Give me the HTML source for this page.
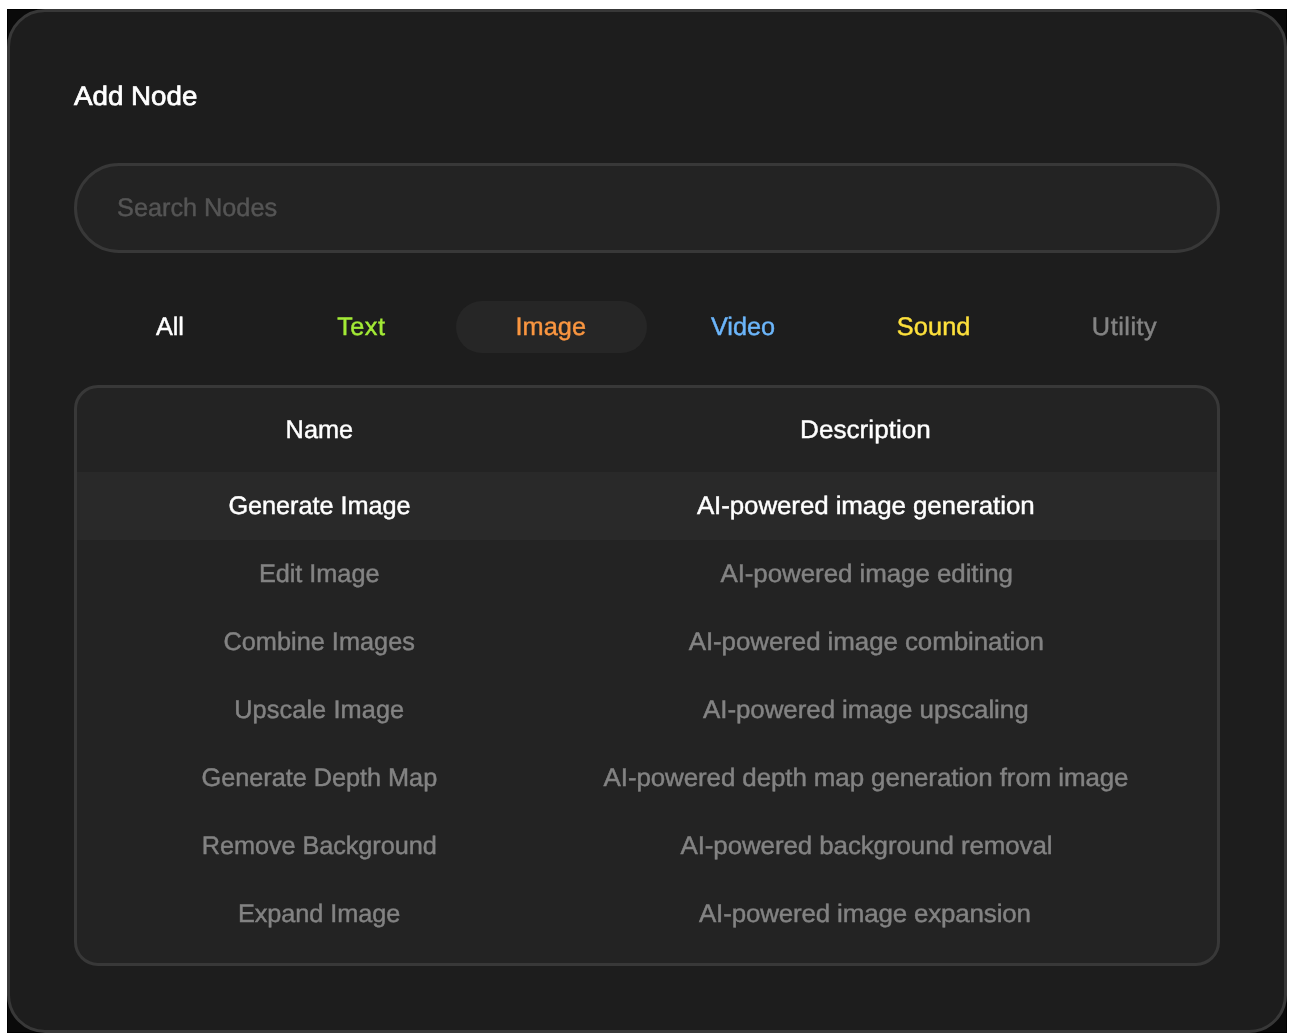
<!DOCTYPE html>
<html><head><meta charset="utf-8"><title>Add Node</title>
<style>
html,body{margin:0;padding:0;background:#fff;}
body{width:1295px;height:1036px;position:relative;overflow:hidden;font-family:"Liberation Sans",sans-serif;}
.back{position:absolute;left:7px;top:9px;width:1280px;height:1024px;background:#0a0a0a;box-shadow:inset 0 0 0 1px #000;}
.panel{position:absolute;left:7px;top:9px;width:1280px;height:1024px;box-sizing:border-box;border:3px solid #383838;border-radius:38px;background:#1d1d1d;}
.search{position:absolute;left:74px;top:163px;width:1146px;height:90px;box-sizing:border-box;border:3px solid #383838;border-radius:45px;background:#232323;}
.pill{position:absolute;left:456px;top:301px;width:191px;height:52px;border-radius:26px;background:#262626;}
.table{position:absolute;left:74px;top:385px;width:1146px;height:581px;box-sizing:border-box;border:3px solid #383838;border-radius:24px;background:#232323;overflow:hidden;}
.hl{position:absolute;left:77px;top:472px;width:1140px;height:68px;background:#292929;}
.txt{position:absolute;left:0;top:0;width:1295px;height:1036px;will-change:transform;}
.t{position:absolute;white-space:nowrap;text-rendering:geometricPrecision;font-size:25.3px;line-height:0;height:0;width:0;display:flex;justify-content:center;align-items:baseline;color:#fff;}
.t span{display:inline-block;line-height:0;-webkit-text-stroke:0.45px currentColor;}
.l{justify-content:flex-start;}
.g{color:#838383;}
</style></head><body>
<div class="back"></div>
<div class="panel"></div>
<div class="search"></div>
<div class="pill"></div>
<div class="table"></div>
<div class="hl"></div>
<div class="txt">

<div class="t l" style="left:74.28px;top:96.05px;letter-spacing:-0.006px;font-size:26.7px;"><span style="margin-right:0.006px;transform:scaleX(1.04);transform-origin:left center;-webkit-text-stroke-width:0.7px;">Add Node</span></div>
<div class="t l" style="left:117.10px;top:207.53px;letter-spacing:-0.027px;color:#555;"><span style="margin-right:0.027px;">Search Nodes</span></div>
<div class="t " style="left:169.97px;top:326.53px;letter-spacing:-0.045px;color:#fff;"><span style="margin-right:0.045px;">All</span></div>
<div class="t " style="left:361.08px;top:326.53px;letter-spacing:0.431px;color:#a3ea36;"><span style="margin-right:-0.431px;">Text</span></div>
<div class="t " style="left:550.69px;top:326.53px;letter-spacing:0.06px;color:#fa9640;"><span style="margin-right:-0.06px;">Image</span></div>
<div class="t " style="left:743.07px;top:326.53px;letter-spacing:-0.001px;color:#6cb6fb;"><span style="margin-right:0.001px;">Video</span></div>
<div class="t " style="left:933.63px;top:326.53px;letter-spacing:0.1px;color:#fde03c;"><span style="margin-right:-0.1px;">Sound</span></div>
<div class="t " style="left:1124.31px;top:326.53px;letter-spacing:0.505px;color:#838383;"><span style="margin-right:-0.505px;">Utility</span></div>
<div class="t " style="left:319.39px;top:429.53px;letter-spacing:0.048px;"><span style="margin-right:-0.048px;">Name</span></div>
<div class="t " style="left:865.29px;top:429.53px;letter-spacing:0.034px;"><span style="margin-right:-0.034px;transform:scaleX(1.03);transform-origin:center center;">Description</span></div>
<div class="t " style="left:319.49px;top:505.53px;letter-spacing:-0.046px;"><span style="margin-right:0.046px;">Generate Image</span></div>
<div class="t " style="left:865.95px;top:505.53px;letter-spacing:-0.09px;"><span style="margin-right:0.09px;transform:scaleX(1.025);transform-origin:center center;">AI-powered image generation</span></div>
<div class="t g" style="left:319.18px;top:573.53px;letter-spacing:-0.036px;"><span style="margin-right:0.036px;">Edit Image</span></div>
<div class="t g" style="left:866.25px;top:573.53px;letter-spacing:-0.064px;"><span style="margin-right:0.064px;transform:scaleX(1.025);transform-origin:center center;">AI-powered image editing</span></div>
<div class="t g" style="left:319.19px;top:641.53px;letter-spacing:0.013px;"><span style="margin-right:-0.013px;">Combine Images</span></div>
<div class="t g" style="left:865.99px;top:641.53px;letter-spacing:-0.077px;"><span style="margin-right:0.077px;transform:scaleX(1.025);transform-origin:center center;">AI-powered image combination</span></div>
<div class="t g" style="left:319.16px;top:709.53px;letter-spacing:0.108px;"><span style="margin-right:-0.108px;">Upscale Image</span></div>
<div class="t g" style="left:866.14px;top:709.53px;letter-spacing:-0.063px;"><span style="margin-right:0.063px;transform:scaleX(1.025);transform-origin:center center;">AI-powered image upscaling</span></div>
<div class="t g" style="left:319.41px;top:777.53px;letter-spacing:-0.036px;"><span style="margin-right:0.036px;">Generate Depth Map</span></div>
<div class="t g" style="left:865.94px;top:777.53px;letter-spacing:-0.096px;"><span style="margin-right:0.096px;transform:scaleX(1.025);transform-origin:center center;">AI-powered depth map generation from image</span></div>
<div class="t g" style="left:319.25px;top:845.53px;letter-spacing:-0.082px;"><span style="margin-right:0.082px;">Remove Background</span></div>
<div class="t g" style="left:866.34px;top:845.53px;letter-spacing:-0.092px;"><span style="margin-right:0.092px;transform:scaleX(1.025);transform-origin:center center;">AI-powered background removal</span></div>
<div class="t g" style="left:319.11px;top:913.53px;letter-spacing:-0.063px;"><span style="margin-right:0.063px;">Expand Image</span></div>
<div class="t g" style="left:865.24px;top:913.53px;letter-spacing:-0.149px;"><span style="margin-right:0.149px;transform:scaleX(1.025);transform-origin:center center;">AI-powered image expansion</span></div>
</div>
</body></html>
